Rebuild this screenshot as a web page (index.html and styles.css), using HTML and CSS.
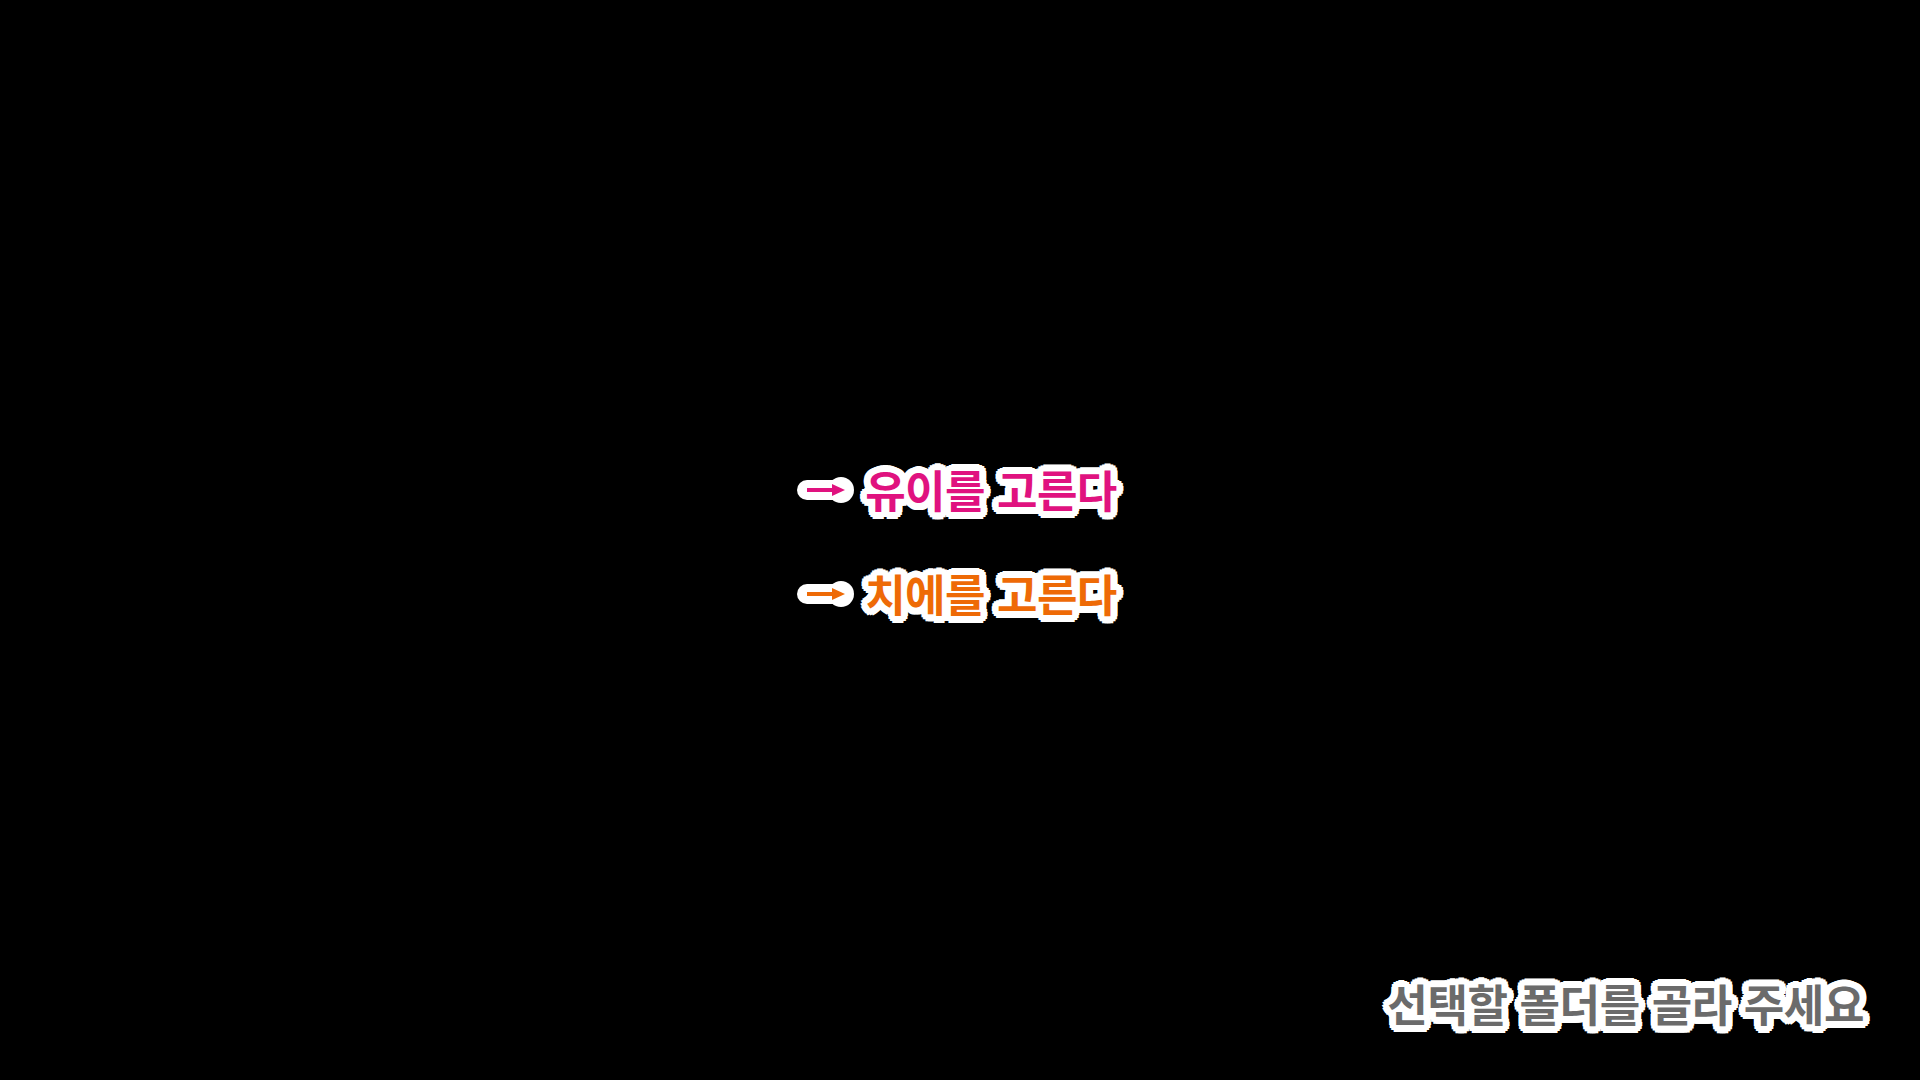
FILE: index.html
```html
<!DOCTYPE html>
<html lang="ko">
<head>
<meta charset="utf-8">
<title>폴더 선택</title>
<link rel="stylesheet" href="styles.css">
</head>
<body>
<div class="stage">
  <div class="choices">
    <div class="choice pink">
      <svg class="arrow" width="58" height="28" viewBox="0 0 58 28" aria-hidden="true">
        <line x1="10" y1="14" x2="42" y2="14" stroke="#fff" stroke-width="20" stroke-linecap="round"/>
        <circle cx="44" cy="14" r="13" fill="#fff"/>
        <line x1="10" y1="14" x2="38" y2="14" stroke="currentColor" stroke-width="4"/>
        <polygon points="35,8 48,14 35,20" fill="currentColor"/>
      </svg>
      <span class="label">유이를 고른다</span>
    </div>
    <div class="choice orange">
      <svg class="arrow" width="58" height="28" viewBox="0 0 58 28" aria-hidden="true">
        <line x1="10" y1="14" x2="42" y2="14" stroke="#fff" stroke-width="20" stroke-linecap="round"/>
        <circle cx="44" cy="14" r="13" fill="#fff"/>
        <line x1="10" y1="14" x2="38" y2="14" stroke="currentColor" stroke-width="4"/>
        <polygon points="35,8 48,14 35,20" fill="currentColor"/>
      </svg>
      <span class="label">치에를 고른다</span>
    </div>
  </div>
  <div class="caption">선택할 폴더를 골라 주세요</div>
</div>
</body>
</html>
```
FILE: styles.css
```css
html, body {
  margin: 0;
  padding: 0;
  background: #000;
  width: 1920px;
  height: 1080px;
  overflow: hidden;
}
.stage {
  width: 1920px;
  height: 1080px;
  display: grid;
  grid-template: 1fr / 1fr;
  font-family: "Noto Sans CJK KR", "Noto Sans", sans-serif;
  font-weight: 700;
}
.choices {
  grid-area: 1 / 1;
  align-self: center;
  justify-self: center;
  display: flex;
  flex-direction: column;
  gap: 50px;
  margin-top: 2px;
  margin-right: 6px;
}
.choice {
  display: flex;
  align-items: center;
  gap: 10px;
  font-size: 44px;
  line-height: 54px;
  letter-spacing: -0.5px;
}
.choice .arrow {
  display: block;
  flex: none;
  margin-top: 2px;
}
.choice, .caption {
  text-shadow:
    7px 0 0 #fff, -7px 0 0 #fff, 0 7px 0 #fff, 0 -7px 0 #fff,
    5px 5px 0 #fff, -5px 5px 0 #fff, 5px -5px 0 #fff, -5px -5px 0 #fff,
    6.5px 2.7px 0 #fff, -6.5px 2.7px 0 #fff, 6.5px -2.7px 0 #fff, -6.5px -2.7px 0 #fff,
    2.7px 6.5px 0 #fff, -2.7px 6.5px 0 #fff, 2.7px -6.5px 0 #fff, -2.7px -6.5px 0 #fff,
    4px 0 0 #fff, -4px 0 0 #fff, 0 4px 0 #fff, 0 -4px 0 #fff,
    3px 3px 0 #fff, -3px 3px 0 #fff, 3px -3px 0 #fff, -3px -3px 0 #fff;
}
.pink { color: #e0127f; }
.orange { color: #ee6a06; }
.caption {
  grid-area: 1 / 1;
  align-self: end;
  justify-self: end;
  margin: 0 56px 50px 0;
  color: #6b6b6b;
  font-size: 44px;
  line-height: 54px;
  letter-spacing: -0.4px;
}
```
